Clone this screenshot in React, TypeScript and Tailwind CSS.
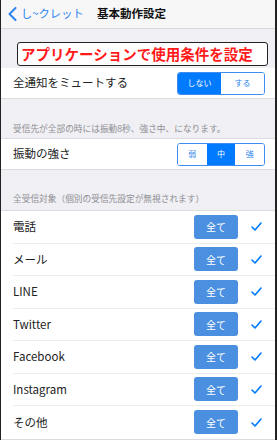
import React from 'react';

const targets = ['電話', 'メール', 'LINE', 'Twitter', 'Facebook', 'Instagram', 'その他'];

const font = { fontFamily: '"Noto Sans CJK JP", "Noto Sans", sans-serif' };

const Check = () => (
  <svg width="11" height="9" viewBox="0 0 11 9" fill="none">
    <path d="M1 5 L4 8 L10 1" stroke="#007aff" strokeWidth="1.6" strokeLinecap="round" strokeLinejoin="round" />
  </svg>
);

export default function App() {
  return (
    <div className="w-[277px] h-[440px] overflow-hidden bg-[#efeff4] flex flex-col border-l border-r-2 border-[#222]" style={font}>
      {/* ナビゲーションバー */}
      <div className="h-[29px] shrink-0 bg-[#f7f7f8] border-b border-[#d8d8dc] flex items-center">
        <div className="flex items-center pl-[7px] w-[96px] text-[#2b84ee]">
          <svg width="9" height="14" viewBox="0 0 9 14" fill="none">
            <path d="M7.5 1 L1.5 7 L7.5 13" stroke="#2b84ee" strokeWidth="2" strokeLinecap="round" strokeLinejoin="round" />
          </svg>
          <span className="ml-[4px] text-[11.3px] leading-none">し~クレット</span>
        </div>
        <span className="text-[11.5px] font-bold text-[#111] leading-none">基本動作設定</span>
      </div>

      {/* 注釈 */}
      <div className="h-[39px] shrink-0 flex items-end pb-[2px] pl-[16px] pr-[7px]">
        <div className="w-full h-[24px] bg-white border border-[#222] rounded-[3px] flex items-center pl-[3px]">
          <span className="text-[14.5px] font-bold text-[#ff1a1a] leading-none">アプリケーションで使用条件を設定</span>
        </div>
      </div>

      {/* ミュート */}
      <div className="h-[31px] shrink-0 bg-white border-b border-[#dcdce0] flex items-center justify-between pl-[12px] pr-[10px]">
        <span className="text-[11.5px] text-[#222]">全通知をミュートする</span>
        <div className="flex w-[88px] h-[23px] border border-[#3d8ef0] rounded-[3px] overflow-hidden text-[8px]">
          <div className="flex-1 bg-[#007aff] text-white flex items-center justify-center">しない</div>
          <div className="flex-1 bg-white text-[#2b84ee] flex items-center justify-center">する</div>
        </div>
      </div>

      <div className="h-[39px] shrink-0 flex items-end pl-[12px] pb-[4px]">
        <span className="text-[8.7px] text-[#8e8e93] leading-none">受信先が全部の時には振動8秒、強さ中、になります。</span>
      </div>

      {/* 振動の強さ */}
      <div className="h-[32px] shrink-0 bg-white border-y border-[#dcdce0] flex items-center justify-between pl-[12px] pr-[10px]">
        <span className="text-[11.5px] text-[#222]">振動の強さ</span>
        <div className="flex w-[88px] h-[23px] border border-[#3d8ef0] rounded-[3px] overflow-hidden text-[8px]">
          <div className="flex-1 bg-white text-[#2b84ee] flex items-center justify-center">弱</div>
          <div className="flex-1 bg-[#007aff] text-white flex items-center justify-center">中</div>
          <div className="flex-1 bg-white text-[#2b84ee] flex items-center justify-center">強</div>
        </div>
      </div>

      <div className="h-[40px] shrink-0 flex items-end pl-[12px] pb-[6px]">
        <span className="text-[8.7px] text-[#8e8e93] leading-none">全受信対象（個別の受信先設定が無視されます）</span>
      </div>

      {/* 受信対象リスト */}
      <div className="bg-white border-t border-[#dcdce0] border-b">
        {targets.map((name, i) => (
          <div key={name} className="pl-[12px]">
            <div className={`h-[32.5px] flex items-center pr-[13px] ${i < targets.length - 1 ? 'border-b border-[#ececef]' : ''}`}>
              <span className="flex-1 text-[11.5px] text-[#222]">{name}</span>
              <div className="w-[44px] h-[24px] rounded-[3px] bg-[#4a8fe0] text-white text-[10px] flex items-center justify-center">全て</div>
              <div className="w-[24px] flex justify-end">
                <Check />
              </div>
            </div>
          </div>
        ))}
      </div>
      <div className="flex-1 bg-white" />
    </div>
  );
}
